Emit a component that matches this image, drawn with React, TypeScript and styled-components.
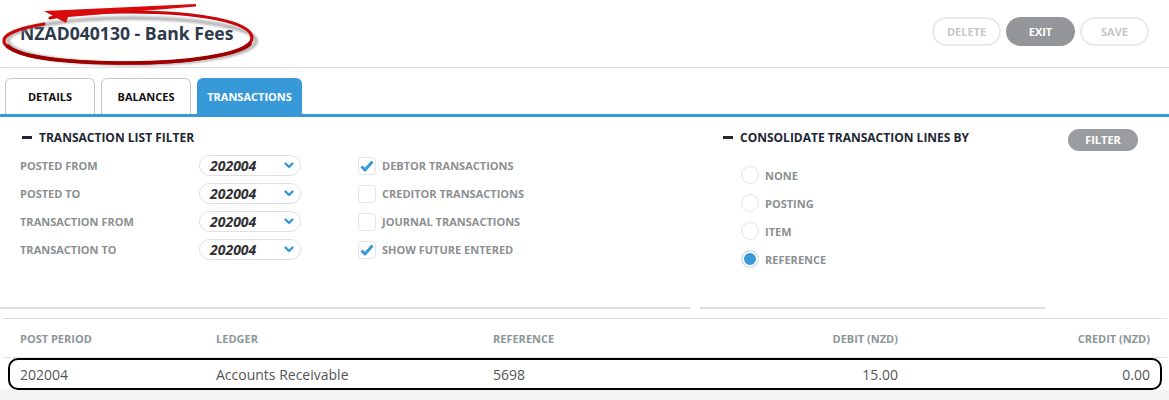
import React from "react";
import styled, { createGlobalStyle } from "styled-components";

const GlobalStyle = createGlobalStyle`
  body {
    margin: 0;
    background: #fff;
    font-family: "Open Sans", "Liberation Sans", sans-serif;
  }
  * { box-sizing: border-box; }
`;

const Page = styled.div`
  width: 1169px;
  height: 400px;
  overflow: hidden;
  background: #fff;
`;

const Header = styled.header`
  height: 68px;
  display: flex;
  align-items: center;
  justify-content: space-between;
  padding: 0 20px;
  border-bottom: 1px solid #dddbe8;
`;

const TitleWrap = styled.div`
  position: relative;
  padding-bottom: 2px;
`;

const Title = styled.h1`
  margin: 0;
  font-size: 17.6px;
  font-weight: 700;
  color: #2e3a4b;
`;

const Annotation = styled.svg`
  position: absolute;
  left: -20px;
  top: -21px;
  pointer-events: none;
  overflow: visible;
`;

const Actions = styled.div`
  display: flex;
  gap: 5px;
  padding-bottom: 5px;
`;

const PillButton = styled.button<{ $primary?: boolean }>`
  width: 69px;
  height: 29px;
  border-radius: 15px;
  border: 2px solid ${({ $primary }) => ($primary ? "#939799" : "#e7ebeb")};
  background: ${({ $primary }) => ($primary ? "#939799" : "#fff")};
  color: ${({ $primary }) => ($primary ? "#fff" : "#c4c8c9")};
  font-family: inherit;
  font-size: 11px;
  font-weight: 700;
  padding: 0;
`;

const TabBar = styled.nav`
  display: flex;
  gap: 6px;
  padding: 10px 0 0 5px;
  border-bottom: 3px solid #3899d9;
`;

const Tab = styled.div<{ $active?: boolean; $width: number }>`
  width: ${({ $width }) => $width}px;
  height: 36px;
  display: flex;
  align-items: center;
  justify-content: center;
  border: 1px solid ${({ $active }) => ($active ? "#3899d9" : "#c9c9c9")};
  border-bottom: none;
  border-radius: 6px 6px 0 0;
  background: ${({ $active }) => ($active ? "#3899d9" : "#fff")};
  color: ${({ $active }) => ($active ? "#fff" : "#111")};
  font-size: 11px;
  font-weight: 700;
`;

const FilterArea = styled.section`
  display: grid;
  grid-template-columns: 690px 345px 1fr;
  column-gap: 10px;
  height: 201px;
`;

const Panel = styled.div<{ $pad: number }>`
  padding: 11px 0 0 ${({ $pad }) => $pad}px;
  border-bottom: 2px solid #dddbe8;
  height: 192px;
`;

const SectionTitle = styled.h2<{ $indent?: number }>`
  margin: 0;
  display: flex;
  align-items: center;
  gap: 7px;
  padding-left: ${({ $indent }) => $indent ?? 0}px;
  font-size: 12px;
  font-weight: 700;
  color: #1e2733;
  height: 18px;
`;

const Minus = styled.span`
  display: inline-block;
  width: 10px;
  height: 3px;
  background: #1e2733;
`;

const FilterGrid = styled.div`
  display: grid;
  grid-template-columns: 179px 102px 1fr;
  row-gap: 7px;
  margin-top: 9px;
`;

const FieldLabel = styled.span`
  font-size: 11px;
  font-weight: 700;
  color: #8b9092;
  display: flex;
  align-items: center;
  height: 21px;
`;

const Select = styled.div`
  height: 21px;
  border: 1px solid #dedfe3;
  border-radius: 11px;
  display: flex;
  align-items: center;
  justify-content: space-between;
  padding: 0 6px 0 10px;
  font-size: 14px;
  font-weight: 700;
  font-style: italic;
  color: #2f2f33;
`;

const CheckRow = styled.label`
  display: flex;
  align-items: center;
  gap: 6px;
  padding-left: 57px;
  font-size: 11px;
  font-weight: 700;
  color: #8b9092;
  height: 21px;
`;

const Box = styled.span`
  width: 18px;
  height: 18px;
  border: 1px solid #e3e4e6;
  border-radius: 3px;
  display: flex;
  align-items: center;
  justify-content: center;
`;

const RadioList = styled.div`
  display: flex;
  flex-direction: column;
  gap: 10px;
  padding: 20px 0 0 18px;
`;

const RadioRow = styled.label`
  display: flex;
  align-items: center;
  gap: 6px;
  font-size: 11px;
  font-weight: 700;
  color: #8b9092;
  height: 18px;
`;

const RadioDot = styled.span<{ $on?: boolean }>`
  width: 18px;
  height: 18px;
  border-radius: 50%;
  border: 1px solid #e3e4e6;
  background: ${({ $on }) => ($on ? "#3899d9" : "#fff")};
  box-shadow: ${({ $on }) => ($on ? "inset 0 0 0 2px #fff" : "none")};
`;

const FilterCell = styled.div`
  padding: 10px 0 0 13px;
`;

const FilterButton = styled.button`
  width: 70px;
  height: 22px;
  border: none;
  border-radius: 11px;
  background: #9a9ea0;
  color: #fff;
  font-family: inherit;
  font-size: 11px;
  font-weight: 700;
  padding: 0;
`;

const Table = styled.div`
  margin: 0 2px 0 3px;
  border-top: 1px solid #dcdcdc;
`;

const Row = styled.div<{ $head?: boolean }>`
  position: relative;
  display: grid;
  grid-template-columns: 196px 277px 205px 200px 1fr;
  align-items: center;
  padding: 0 17px;
  height: ${({ $head }) => ($head ? "38px" : "33px")};
  border-top: ${({ $head }) => ($head ? "none" : "1px solid #e4e4e4")};
  font-size: ${({ $head }) => ($head ? "11px" : "14px")};
  font-weight: ${({ $head }) => ($head ? 700 : 400)};
  color: ${({ $head }) => ($head ? "#8c9698" : "#555")};
`;

const Cell = styled.span<{ $right?: boolean }>`
  text-align: ${({ $right }) => ($right ? "right" : "left")};
`;

const RowMark = styled.span`
  position: absolute;
  left: 5px;
  right: 5px;
  top: 0;
  bottom: 0;
  border: 2px solid #000;
  border-radius: 10px;
  pointer-events: none;
`;

const Footer = styled.div`
  background: #f3f3f3;
  height: 20px;
`;

const Chevron = () => (
  <svg width="10" height="7" viewBox="0 0 10 7">
    <polyline points="1.5,1.5 5,5 8.5,1.5" fill="none" stroke="#3899d9" strokeWidth="2.4" strokeLinecap="round" strokeLinejoin="round" />
  </svg>
);

const Tick = () => (
  <svg width="14" height="12" viewBox="0 0 14 12">
    <path d="M1.5 6.5 L5 10 L12.5 1.5" fill="none" stroke="#3899d9" strokeWidth="3" strokeLinejoin="round" />
  </svg>
);

const filterRows = [
  { label: "POSTED FROM", check: "DEBTOR TRANSACTIONS", on: true },
  { label: "POSTED TO", check: "CREDITOR TRANSACTIONS", on: false },
  { label: "TRANSACTION FROM", check: "JOURNAL TRANSACTIONS", on: false },
  { label: "TRANSACTION TO", check: "SHOW FUTURE ENTERED", on: true },
];

const radios = ["NONE", "POSTING", "ITEM", "REFERENCE"];

export default function App() {
  return (
    <Page>
      <GlobalStyle />
      <Header>
        <TitleWrap>
          <Title>NZAD040130 - Bank Fees</Title>
          <Annotation width="270" height="70" viewBox="0 0 270 70">
            <defs>
              <filter id="blur" x="-10%" y="-30%" width="120%" height="160%">
                <feGaussianBlur stdDeviation="1.2" />
              </filter>
            </defs>
            <ellipse cx="132" cy="41" rx="124" ry="23" fill="none" stroke="#8a8a8a" strokeWidth="4" opacity="0.6" filter="url(#blur)" />
            <path d="M44 24 C 20 28, 2 34, 4 42 C 8 56, 60 63, 130 63 C 200 63, 252 52, 252 38 C 252 22, 200 12, 130 12 C 100 12, 70 14, 50 18" fill="none" stroke="#c8080a" strokeWidth="3.2" strokeLinecap="round" />
            <path d="M8 46 C 20 58, 70 63, 130 63 C 190 63, 240 54, 250 44" fill="none" stroke="#9e0000" strokeWidth="3.5" strokeLinecap="round" />
            <path d="M44 11 L 196 4 L 196 6.5 L 68 17 L 66 23 Z" fill="#d80a0c" />
          </Annotation>
        </TitleWrap>
        <Actions>
          <PillButton>DELETE</PillButton>
          <PillButton $primary>EXIT</PillButton>
          <PillButton>SAVE</PillButton>
        </Actions>
      </Header>

      <TabBar>
        <Tab $width={90}>DETAILS</Tab>
        <Tab $width={90}>BALANCES</Tab>
        <Tab $width={105} $active>TRANSACTIONS</Tab>
      </TabBar>

      <FilterArea>
        <Panel $pad={20}>
          <SectionTitle $indent={2}>
            <Minus />
            TRANSACTION LIST FILTER
          </SectionTitle>
          <FilterGrid>
            {filterRows.map((r) => (
              <React.Fragment key={r.label}>
                <FieldLabel>{r.label}</FieldLabel>
                <Select>
                  202004
                  <Chevron />
                </Select>
                <CheckRow>
                  <Box>{r.on && <Tick />}</Box>
                  {r.check}
                </CheckRow>
              </React.Fragment>
            ))}
          </FilterGrid>
        </Panel>
        <Panel $pad={23}>
          <SectionTitle>
            <Minus />
            CONSOLIDATE TRANSACTION LINES BY
          </SectionTitle>
          <RadioList>
            {radios.map((r) => (
              <RadioRow key={r}>
                <RadioDot $on={r === "REFERENCE"} />
                {r}
              </RadioRow>
            ))}
          </RadioList>
        </Panel>
        <FilterCell>
          <FilterButton>FILTER</FilterButton>
        </FilterCell>
      </FilterArea>

      <Table>
        <Row $head>
          <Cell>POST PERIOD</Cell>
          <Cell>LEDGER</Cell>
          <Cell>REFERENCE</Cell>
          <Cell $right>DEBIT (NZD)</Cell>
          <Cell $right>CREDIT (NZD)</Cell>
        </Row>
        <Row>
          <Cell>202004</Cell>
          <Cell>Accounts Receivable</Cell>
          <Cell>5698</Cell>
          <Cell $right>15.00</Cell>
          <Cell $right>0.00</Cell>
          <RowMark />
        </Row>
      </Table>
      <Footer />
    </Page>
  );
}
